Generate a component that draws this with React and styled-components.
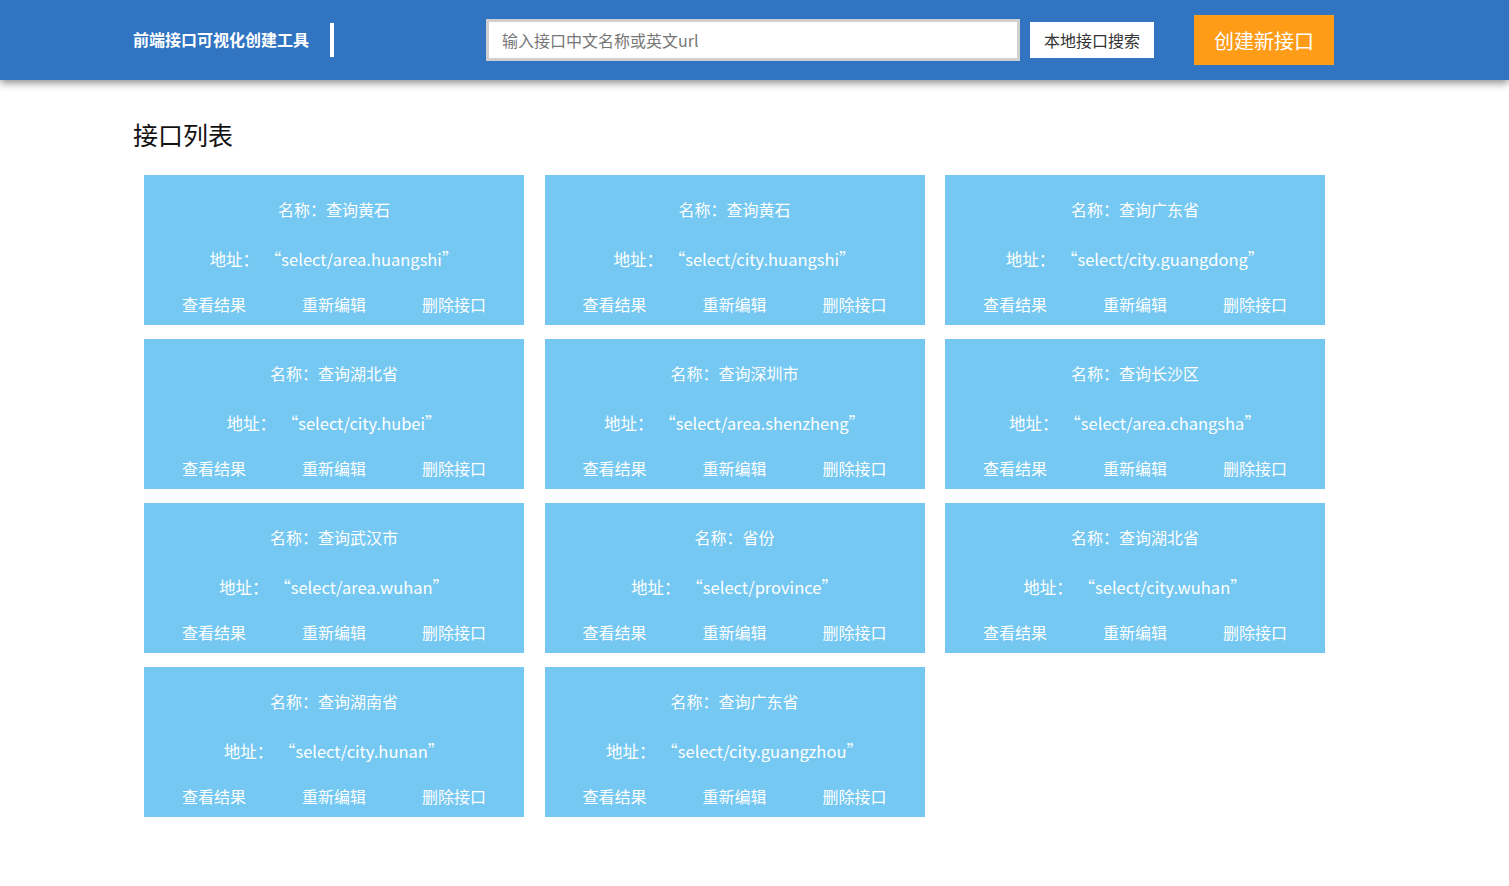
import React from "react";
import styled, { createGlobalStyle } from "styled-components";

const apis = [
  { name: "查询黄石", url: "select/area.huangshi" },
  { name: "查询黄石", url: "select/city.huangshi" },
  { name: "查询广东省", url: "select/city.guangdong" },
  { name: "查询湖北省", url: "select/city.hubei" },
  { name: "查询深圳市", url: "select/area.shenzheng" },
  { name: "查询长沙区", url: "select/area.changsha" },
  { name: "查询武汉市", url: "select/area.wuhan" },
  { name: "省份", url: "select/province" },
  { name: "查询湖北省", url: "select/city.wuhan" },
  { name: "查询湖南省", url: "select/city.hunan" },
  { name: "查询广东省", url: "select/city.guangzhou" },
];

const App = () => {
  return (
    <>
      <GlobalStyle />
      <Header>
        <Brand>前端接口可视化创建工具</Brand>
        <Divider />
        <SearchInput placeholder="输入接口中文名称或英文url" />
        <SearchButton>本地接口搜索</SearchButton>
        <CreateButton>创建新接口</CreateButton>
      </Header>
      <Main>
        <PageTitle>接口列表</PageTitle>
        <CardGrid>
          {apis.map((api, i) => (
            <Card key={i}>
              <CardName>名称：{api.name}</CardName>
              <CardUrl>
                <UrlLabel>地址：</UrlLabel>“{api.url}”
              </CardUrl>
              <Actions>
                <Action>查看结果</Action>
                <Action>重新编辑</Action>
                <Action>删除接口</Action>
              </Actions>
            </Card>
          ))}
        </CardGrid>
      </Main>
    </>
  );
};

export default App;

// Styled Components
const GlobalStyle = createGlobalStyle`
  * { box-sizing: border-box; }
  body {
    margin: 0;
    background: #fff;
    font-family: "Noto Sans CJK SC", "Noto Sans", sans-serif;
  }
`;

const Header = styled.header`
  display: flex;
  align-items: center;
  height: 80px;
  padding-left: 133px;
  background-color: #3074c2;
  box-shadow: 0 3px 8px rgba(0, 0, 0, 0.45);
  position: relative;
`;

const Brand = styled.h1`
  margin: 0;
  color: #fff;
  font-size: 16px;
  font-weight: bold;
  line-height: 20px;
  margin-top: -2px;
`;

const Divider = styled.span`
  width: 4px;
  height: 34px;
  margin-left: 21px;
  background: #fff;
`;

const SearchInput = styled.input`
  width: 534px;
  height: 42px;
  margin-left: 152px;
  padding: 0 13px;
  border: 3px solid #cfcfcf;
  background: #fff;
  font-family: inherit;
  font-size: 16px;
  color: #333;
  outline: none;

  &::placeholder {
    color: #777;
  }
`;

const SearchButton = styled.button`
  width: 124px;
  height: 36px;
  margin-left: 10px;
  border: none;
  background: #fff;
  color: #333;
  font-family: inherit;
  font-size: 16px;
  padding: 0;
  cursor: pointer;
`;

const CreateButton = styled.button`
  width: 140px;
  height: 50px;
  margin-left: 40px;
  border: none;
  background: #ff9c17;
  color: #fff;
  font-family: inherit;
  font-size: 20px;
  padding: 0;
  cursor: pointer;
`;

const Main = styled.main`
  padding: 0 0 40px 133px;
`;

const PageTitle = styled.h2`
  margin: 0;
  padding-top: 35px;
  font-size: 25px;
  font-weight: normal;
  line-height: 38px;
  color: #111;
`;

const CardGrid = styled.div`
  display: grid;
  grid-template-columns: repeat(3, 380px);
  column-gap: 20.5px;
  row-gap: 14px;
  margin: 22px 0 0 11px;
`;

const Card = styled.div`
  height: 150px;
  padding-top: 23px;
  background-color: #74c8f2;
  color: #fff;
  text-align: center;
`;

const CardName = styled.div`
  font-size: 16px;
  line-height: 22px;
`;

const CardUrl = styled.div`
  margin-top: 28px;
  font-size: 16.5px;
  line-height: 22px;
`;

const UrlLabel = styled.span`
  margin-right: 14px;
`;

const Actions = styled.div`
  display: flex;
  justify-content: center;
  gap: 56px;
  margin-top: 23px;
`;

const Action = styled.span`
  font-size: 16px;
  line-height: 22px;
  cursor: pointer;
`;
